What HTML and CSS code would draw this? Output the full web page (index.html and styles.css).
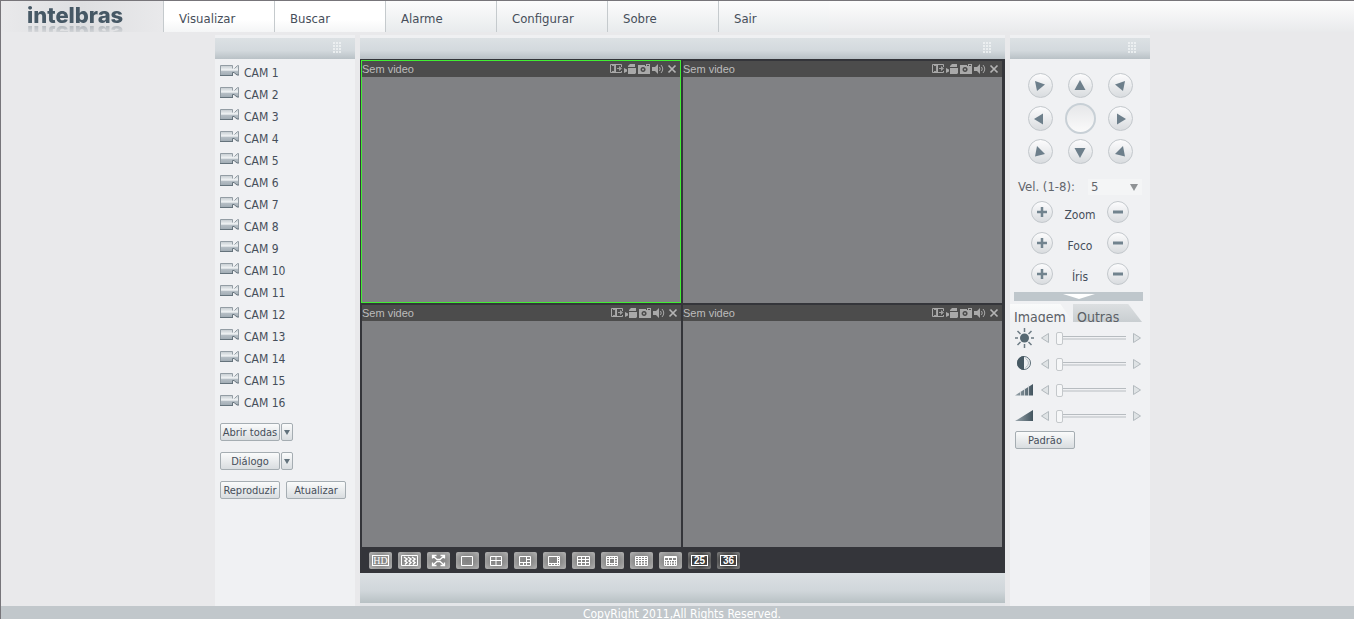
FILE: index.html
```html
<!DOCTYPE html>
<html lang="pt-BR">
<head>
<meta charset="utf-8">
<title>Intelbras</title>
<link rel="stylesheet" href="styles.css">
</head>
<body>
<svg class="defs" aria-hidden="true">
  <defs>
    <linearGradient id="camfill" x1="0" y1="0" x2="0" y2="1">
      <stop offset="0" stop-color="#c3cacf"/><stop offset=".45" stop-color="#f1f4f5"/><stop offset=".6" stop-color="#b4bdc4"/><stop offset="1" stop-color="#a0abb3"/>
    </linearGradient>
    <linearGradient id="dark" x1="0" y1="0" x2="1" y2="0">
      <stop offset="0" stop-color="#9aa6ad"/><stop offset="1" stop-color="#43555f"/>
    </linearGradient>
    <symbol id="cam" viewBox="0 0 19 13">
      <path d="M.5 1.500h12v3h2l2-2.500h2v9h-1.500l-2.500-2.500h-2v3H.5z" fill="url(#camfill)"/>
      <path d="M.5 11V1.500h12v3M14.500 4.500l3-3h1V11" fill="none" stroke="#939da4"/>
      <path d="M0 11.500h13M12.500 11V8.500h1.500l3 2.500h2" fill="none" stroke="#65737c"/>
    </symbol>
    <symbol id="grip" viewBox="0 0 9 11">
      <path d="M0 1h2M3 1h2M6 1h2M0 4h2M3 4h2M6 4h2M0 7h2M3 7h2M6 7h2M0 10h2M3 10h2M6 10h2" stroke="#f1f4f5" stroke-width="2" opacity=".8"/>
    </symbol>
    <symbol id="t-out" viewBox="0 0 12 10">
      <path d="M11.500 3V.5H.5v8h11V7M5.500 1v7" fill="none" stroke="#a9a9a9"/>
      <path d="M2 1h3v7H2zM7 4h2V2l3 2.500L9 7V5H7z" fill="#a9a9a9" opacity=".9"/>
      <path d="M2 2h2v5H2z" fill="#4c4c4c"/>
    </symbol>
    <symbol id="t-rec" viewBox="0 0 12 10">
      <path d="M4 2l2-2h5v3H4zM4 4h8v5l-1 1H4zM0 4l3 1.500v2L0 9z" fill="#a9a9a9"/>
    </symbol>
    <symbol id="t-photo" viewBox="0 0 12 10">
      <path d="M0 1h7v1h1V0h4v10H0zM5 3a2.500 2.500 0 1 0 .1 0zM9 1v1h2V1z" fill="#a9a9a9" fill-rule="evenodd"/>
      <circle cx="5" cy="5.500" r="1" fill="#a9a9a9"/>
    </symbol>
    <symbol id="t-sound" viewBox="0 0 12 10">
      <path d="M0 3h3l3-3v10L3 7H0z" fill="#a9a9a9"/>
      <path d="M7.500 3q1.500 2 0 4M9 1q3.500 4 0 8" fill="none" stroke="#a9a9a9"/>
    </symbol>
    <symbol id="t-close" viewBox="0 0 12 10">
      <path d="M2.500 1.500l7 7M9.500 1.500l-7 7" stroke="#b4b4b4" stroke-width="1.700"/>
    </symbol>
    <symbol id="plus" viewBox="0 0 12 12"><path d="M6 1v10M1 6h10" stroke="#71838e" stroke-width="2.500"/></symbol>
    <symbol id="minus" viewBox="0 0 12 12"><path d="M1 6h10" stroke="#71838e" stroke-width="3"/></symbol>
    <symbol id="step-l" viewBox="0 0 8 10"><path d="M7.500.5v9L.5 5z" fill="#dfe3e5" stroke="#b3babe"/></symbol>
    <symbol id="step-r" viewBox="0 0 8 10"><path d="M.5.5v9l7-4.500z" fill="#dfe3e5" stroke="#b3babe"/></symbol>
  </defs>
</svg>

<header class="top">
  <div class="brand"><span class="logo">intelbras</span></div>
  <nav class="menu">
    <a class="active" href="#visualizar">Visualizar</a>
    <a class="active" href="#buscar">Buscar</a>
    <a href="#alarme">Alarme</a>
    <a href="#configurar">Configurar</a>
    <a href="#sobre">Sobre</a>
    <a href="#sair">Sair</a>
  </nav>
</header>

<main class="layout">
  <aside class="panel">
    <div class="panel-head"><svg class="grip"><use href="#grip"/></svg></div>
    <ul class="cams">
      <li><a href="#1"><svg><use href="#cam"/></svg>CAM 1</a></li>
      <li><a href="#2"><svg><use href="#cam"/></svg>CAM 2</a></li>
      <li><a href="#3"><svg><use href="#cam"/></svg>CAM 3</a></li>
      <li><a href="#4"><svg><use href="#cam"/></svg>CAM 4</a></li>
      <li><a href="#5"><svg><use href="#cam"/></svg>CAM 5</a></li>
      <li><a href="#6"><svg><use href="#cam"/></svg>CAM 6</a></li>
      <li><a href="#7"><svg><use href="#cam"/></svg>CAM 7</a></li>
      <li><a href="#8"><svg><use href="#cam"/></svg>CAM 8</a></li>
      <li><a href="#9"><svg><use href="#cam"/></svg>CAM 9</a></li>
      <li><a href="#10"><svg><use href="#cam"/></svg>CAM 10</a></li>
      <li><a href="#11"><svg><use href="#cam"/></svg>CAM 11</a></li>
      <li><a href="#12"><svg><use href="#cam"/></svg>CAM 12</a></li>
      <li><a href="#13"><svg><use href="#cam"/></svg>CAM 13</a></li>
      <li><a href="#14"><svg><use href="#cam"/></svg>CAM 14</a></li>
      <li><a href="#15"><svg><use href="#cam"/></svg>CAM 15</a></li>
      <li><a href="#16"><svg><use href="#cam"/></svg>CAM 16</a></li>
    </ul>
    <div class="actions">
      <div class="split"><button class="btn">Abrir todas</button><button class="btn drop" aria-label="Opções de abrir"><svg viewBox="0 0 8 7"><path d="M1 1h6L4 6z" fill="#62727c"/></svg></button></div>
      <div class="split"><button class="btn">Diálogo</button><button class="btn drop" aria-label="Opções de diálogo"><svg viewBox="0 0 8 7"><path d="M1 1h6L4 6z" fill="#62727c"/></svg></button></div>
      <div class="pair"><button class="btn">Reproduzir</button><button class="btn">Atualizar</button></div>
    </div>
  </aside>

  <section class="center">
    <div class="panel-head"><svg class="grip"><use href="#grip"/></svg></div>
    <div class="stage">
      <div class="videos">
        <article class="video selected">
          <header>Sem video<span class="tools"><button aria-label="Expandir"><svg><use href="#t-out"/></svg></button><button aria-label="Gravar"><svg><use href="#t-rec"/></svg></button><button aria-label="Foto"><svg><use href="#t-photo"/></svg></button><button aria-label="Som"><svg><use href="#t-sound"/></svg></button><button aria-label="Fechar"><svg><use href="#t-close"/></svg></button></span></header>
        </article>
        <article class="video">
          <header>Sem video<span class="tools"><button aria-label="Expandir"><svg><use href="#t-out"/></svg></button><button aria-label="Gravar"><svg><use href="#t-rec"/></svg></button><button aria-label="Foto"><svg><use href="#t-photo"/></svg></button><button aria-label="Som"><svg><use href="#t-sound"/></svg></button><button aria-label="Fechar"><svg><use href="#t-close"/></svg></button></span></header>
        </article>
        <article class="video">
          <header>Sem video<span class="tools"><button aria-label="Expandir"><svg><use href="#t-out"/></svg></button><button aria-label="Gravar"><svg><use href="#t-rec"/></svg></button><button aria-label="Foto"><svg><use href="#t-photo"/></svg></button><button aria-label="Som"><svg><use href="#t-sound"/></svg></button><button aria-label="Fechar"><svg><use href="#t-close"/></svg></button></span></header>
        </article>
        <article class="video">
          <header>Sem video<span class="tools"><button aria-label="Expandir"><svg><use href="#t-out"/></svg></button><button aria-label="Gravar"><svg><use href="#t-rec"/></svg></button><button aria-label="Foto"><svg><use href="#t-photo"/></svg></button><button aria-label="Som"><svg><use href="#t-sound"/></svg></button><button aria-label="Fechar"><svg><use href="#t-close"/></svg></button></span></header>
        </article>
      </div>
      <div class="splits">
        <button class="boxed hd"><span>HD</span></button>
        <button aria-label="Fluidez"><svg viewBox="0 0 23 17"><path d="M3.500 3.500h16v10h-16z"/><path d="M6 5l3 2-2 2 2 1.500-2 2M10 5l3 2-2 2 2 1.500-2 2M14 5l3 2-2 2 2 1.500-2 2" stroke-width="1.500"/></svg></button>
        <button aria-label="Tela cheia"><svg viewBox="0 0 23 17"><path d="M5.500 6.500v-3h4M13.500 3.500h4v3M17.500 10.500v3h-4M9.500 13.500h-4v-3M6 4l4 3.500h3L17 4M6 13l4-3.500h3l4 3.500" stroke-width="1.300"/></svg></button>
        <button aria-label="1 janela"><svg viewBox="0 0 23 17"><path d="M5.500 4.500h11v9h-11z"/></svg></button>
        <button aria-label="4 janelas"><svg viewBox="0 0 23 17"><path d="M5.500 4.500h11v9h-11zM11 4v9M5 8.500h12"/></svg></button>
        <button aria-label="6 janelas"><svg viewBox="0 0 23 17"><path d="M5.500 4.500h11v9h-11zM12.500 4v9M9.500 10v3M12.500 7.500H17M5 10.500h12"/></svg></button>
        <button aria-label="8 janelas"><svg viewBox="0 0 23 17"><path d="M5.500 4.500h11v9h-11zM14.500 4v9M8.500 11v2M11.500 11v2M14 6.500h3M14 8.500h3M5 11.500h12"/></svg></button>
        <button aria-label="9 janelas"><svg viewBox="0 0 23 17"><path d="M5.500 4.500h12v9h-12zM9.500 4v9M13.500 4v9M5 7.500h12M5 10.500h12"/></svg></button>
        <button aria-label="13 janelas"><svg viewBox="0 0 23 17"><path d="M5.500 4.500h11v9h-11zM8.500 4v9M13.500 4v9M11 4v2.500M11 11v2M5 6.500h12M5 11.500h12M5 9h3M14 9h3"/></svg></button>
        <button aria-label="16 janelas"><svg viewBox="0 0 23 17"><path d="M5.500 4.500h12v9h-12zM8.500 4v9M11.500 4v9M14.500 4v9M5 6.500h12M5 8.500h12M5 11h12"/></svg></button>
        <button aria-label="20 janelas"><svg viewBox="0 0 23 17"><path d="M5.500 4.500h12v9h-12zM5 5.500h12M9.500 4v4M13.500 4v4M7.500 8v5M10.500 8v5M12.500 8v5M15.500 8v5M5 8.500h12M5 11h12"/></svg></button>
        <button class="boxed dim"><span>25</span></button>
        <button class="boxed dim"><span>36</span></button>
      </div>
    </div>
    <div class="center-foot"></div>
  </section>

  <aside class="panel">
    <div class="panel-head"><svg class="grip"><use href="#grip"/></svg></div>
    <div class="dpad">
      <button class="round" aria-label="Cima esquerda"><svg viewBox="0 0 12 12"><path d="M1 1l10 3.500L3 11z"/></svg></button>
      <button class="round" aria-label="Cima"><svg viewBox="0 0 12 12"><path d="M6 0l5.500 10H.5z"/></svg></button>
      <button class="round" aria-label="Cima direita"><svg viewBox="0 0 12 12"><path d="M11 1L1 4.500 9 11z"/></svg></button>
      <button class="round" aria-label="Esquerda"><svg viewBox="0 0 12 12"><path d="M0 6l9-5.500v11z"/></svg></button>
      <button class="round big" aria-label="Posição inicial"></button>
      <button class="round" aria-label="Direita"><svg viewBox="0 0 12 12"><path d="M12 6L3 .5v11z"/></svg></button>
      <button class="round" aria-label="Baixo esquerda"><svg viewBox="0 0 12 12"><path d="M3 0l8 8-10 2.500z"/></svg></button>
      <button class="round" aria-label="Baixo"><svg viewBox="0 0 12 12"><path d="M.5 2h11L6 12z"/></svg></button>
      <button class="round" aria-label="Baixo direita"><svg viewBox="0 0 12 12"><path d="M9 0L1 8l10 2.500z"/></svg></button>
    </div>
    <div class="speed">
      <label for="vel">Vel. (1-8):</label>
      <div class="select">
        <select id="vel"><option>1</option><option>2</option><option>3</option><option>4</option><option selected>5</option><option>6</option><option>7</option><option>8</option></select>
        <svg viewBox="0 0 8 8"><path d="M0 1h8L4 8z" fill="#8f9295"/></svg>
      </div>
    </div>
    <div class="lens">
      <button class="round small" aria-label="Mais zoom"><svg><use href="#plus"/></svg></button><span>Zoom</span><button class="round small" aria-label="Menos zoom"><svg><use href="#minus"/></svg></button>
      <button class="round small" aria-label="Mais foco"><svg><use href="#plus"/></svg></button><span>Foco</span><button class="round small" aria-label="Menos foco"><svg><use href="#minus"/></svg></button>
      <button class="round small" aria-label="Mais íris"><svg><use href="#plus"/></svg></button><span>Íris</span><button class="round small" aria-label="Menos íris"><svg><use href="#minus"/></svg></button>
    </div>
    <button class="expander" aria-label="Expandir controles"><svg viewBox="0 0 32 5"><path d="M0 0h32L16 5z" fill="#fff"/></svg></button>
    <div class="tabs">
      <button class="tab on">Imagem</button><button class="tab">Outras</button>
    </div>
    <div class="adjust">
      <div class="row">
        <svg class="kind" viewBox="0 0 20 20"><circle cx="9.500" cy="10" r="4.500" fill="#566872"/><path d="M9.500 0v4M9.500 16v4M0 10h3M16 10h3M2.500 3l3 3M13.500 14l3 3M16.500 3l-3 3M5.500 14l-3 3" stroke="#6c7b84" stroke-width="1.500"/></svg>
        <button class="step" aria-label="Menos brilho"><svg><use href="#step-l"/></svg></button>
        <input type="range" value="0" aria-label="Brilho">
        <button class="step" aria-label="Mais brilho"><svg><use href="#step-r"/></svg></button>
      </div>
      <div class="row">
        <svg class="kind" viewBox="0 0 20 20"><circle cx="9" cy="9" r="6.500" fill="#eef0f2" stroke="#5c6d77"/><path d="M9 2a7 7 0 0 0 0 14z" fill="#475963"/><path d="M10.500 4.500q3 1.500 3 4.500t-3 4.500" fill="none" stroke="#b5bec4"/></svg>
        <button class="step" aria-label="Menos contraste"><svg><use href="#step-l"/></svg></button>
        <input type="range" value="0" aria-label="Contraste">
        <button class="step" aria-label="Mais contraste"><svg><use href="#step-r"/></svg></button>
      </div>
      <div class="row">
        <svg class="kind" viewBox="0 0 20 20"><path d="M0 15.500L18 4v11.500z" fill="url(#dark)"/><path d="M5.500 11v5M9.500 8v8M13.500 5v11" stroke="#dde1e4" stroke-width=".8"/></svg>
        <button class="step" aria-label="Menos saturação"><svg><use href="#step-l"/></svg></button>
        <input type="range" value="0" aria-label="Saturação">
        <button class="step" aria-label="Mais saturação"><svg><use href="#step-r"/></svg></button>
      </div>
      <div class="row">
        <svg class="kind" viewBox="0 0 20 20"><path d="M0 15L18 4v11z" fill="url(#dark)"/></svg>
        <button class="step" aria-label="Menos matiz"><svg><use href="#step-l"/></svg></button>
        <input type="range" value="0" aria-label="Matiz">
        <button class="step" aria-label="Mais matiz"><svg><use href="#step-r"/></svg></button>
      </div>
      <button class="btn">Padrão</button>
    </div>
  </aside>
</main>

<footer class="copyright">CopyRight 2011,All Rights Reserved.</footer>
</body>
</html>
```

FILE: styles.css
```css
* { box-sizing: border-box; }
body {
  margin: 0;
  min-height: 100vh;
  display: flex;
  flex-direction: column;
  background: #e9e9eb;
  border-top: 1px solid #77757a;
  border-left: 1px solid #77757a;
  color: #464e5a;
  font: 12px/16px "DejaVu Sans Condensed", "Noto Sans", sans-serif;
}
button, select { font: inherit; color: inherit; padding: 0; }
button { border: 0; background: none; }
a { color: inherit; text-decoration: none; }
svg { display: block; }
.defs { position: absolute; width: 0; height: 0; }

/* Top bar */
.top {
  display: flex;
  height: 31px;
  background: linear-gradient(#fdfdfd, #e9eaec);
}
.brand {
  width: 162px;
  padding: 2px 0 0 26px;
  overflow: hidden;
  background: linear-gradient(90deg, #e9e9eb, #dedfe1 50%, #e9e9eb);
}
.logo {
  display: block;
  width: 110px;
  height: 22px;
  font: 800 22px/25px Inter, sans-serif;
  color: #465865;
  -webkit-box-reflect: below -1px linear-gradient(transparent 50%, rgba(0, 0, 0, .35));
}
.menu { display: flex; }
.menu a {
  width: 111px;
  padding: 2px 0 0 15px;
  border-left: 1px solid #c5cacd;
  font-size: 13px;
  line-height: 32px;
  background: linear-gradient(#fcfcfc, #e8ebed);
}
.menu .active { background: linear-gradient(#fff 60%, #f4f5f6); }

/* Columns */
.layout {
  flex: 1;
  display: grid;
  grid-template-columns: 140px 645px 140px;
  gap: 5px;
  justify-content: center;
  padding: 3px 0 0 10px;
}
.panel { background: #f0f1f3; }
.panel-head {
  display: flex;
  justify-content: flex-end;
  align-items: center;
  height: 24px;
  padding: 0 13px 2px 0;
  border-top: 3px solid #eff0f2;
  background: linear-gradient(#dce1e4, #d3d9dd 60%, #b9c1c6);
}
.grip { width: 9px; height: 11px; }

/* Camera list */
.cams { margin: 0; padding: 3px 5px 0; list-style: none; }
.cams a { display: flex; align-items: center; gap: 5px; height: 22px; }
.cams svg { width: 19px; height: 13px; margin-bottom: 5px; }
.actions { display: grid; gap: 11px; padding: 9px 5px 0; }
.split { display: flex; gap: 1px; }
.pair { display: flex; gap: 6px; }
.btn {
  width: 60px;
  height: 18px;
  padding-top: 1px;
  border: 1px solid #a5adb2;
  border-radius: 2px;
  background: linear-gradient(#fafbfb, #d9dde0);
  font-size: 11px;
  line-height: 16px;
  white-space: nowrap;
  display: flex;
  justify-content: center;
  align-items: center;
}
.drop { width: 12px; }
.drop svg { width: 8px; height: 7px; }

/* Video wall */
.center { display: flex; flex-direction: column; background: #e4e6e9; }
.stage { flex: 1; display: flex; flex-direction: column; background: #34353a; }
.videos {
  flex: 1;
  display: grid;
  grid-template: 1fr 1fr / 1fr 1fr;
  gap: 1px;
  padding: 1px 3px 0 1px;
}
.video {
  border: solid transparent;
  border-width: 1px 0 0 1px;
  background: #808184;
  background-clip: padding-box;
}
.video.selected { border: 1px solid #41ee33; }
.video header {
  display: flex;
  justify-content: space-between;
  align-items: center;
  height: 16px;
  padding: 0 2px 1px 0;
  background: #4c4c4c;
  color: #bcbcbc;
  font: 11px/14px "Liberation Sans", Arial, sans-serif;
}
.tools { display: flex; gap: 2px; padding-top: 1px; }
.tools svg { width: 12px; height: 10px; }
.splits { display: flex; gap: 6px; height: 26px; padding: 5px 9px; }
.splits button {
  width: 23px;
  height: 17px;
  border-radius: 2px;
  background: radial-gradient(#818181, #8d8d8d 45%, #b4b4b4);
}
.splits svg { width: 23px; height: 17px; fill: none; stroke: #fff; }
.splits .dim { background: radial-gradient(#3a3a3a 40%, #858585); }
.boxed { display: grid; place-items: center; }
.boxed span {
  width: 17px;
  height: 11px;
  border: 1px solid #fff;
  color: #fff;
  font: bold 10px/9px "Liberation Sans", Arial, sans-serif;
}
.hd span { font: 10px/9px "Liberation Serif", serif; }
.center-foot {
  height: 33px;
  border-bottom: 3px solid #e4e6e9;
  background: linear-gradient(#dbe0e3, #d0d6da 60%, #b8c1c4);
}

/* Camera movement */
.dpad {
  display: grid;
  grid-template: repeat(3, 33px) / repeat(3, 40px);
  justify-content: center;
  place-items: center;
  padding-top: 10px;
}
.round {
  display: grid;
  place-items: center;
  width: 25px;
  height: 25px;
  border: 1px solid #c3c8cc;
  border-radius: 50%;
  background: linear-gradient(#fcfcfd, #d9dcdf);
}
.round svg { width: 12px; height: 12px; fill: #6d7f8b; }
.big { width: 31px; height: 31px; border: 2px solid #c8d0d6; background: linear-gradient(#e6e7e9, #fafafa); }
.small { width: 22px; height: 22px; }
.speed {
  display: flex;
  justify-content: space-between;
  align-items: center;
  height: 20px;
  margin-top: 9px;
  padding: 0 8px;
  color: #62666c;
  font-size: 13px;
}
.select { display: grid; width: 54px; align-items: center; background: #f4f5f6; }
.select select, .select svg { grid-area: 1 / 1; }
.select select { appearance: none; width: 100%; padding-left: 3px; border: 0; background: none; }
.select svg { justify-self: end; width: 8px; height: 8px; margin-right: 4px; pointer-events: none; }
.lens {
  display: grid;
  grid-template: repeat(3, 31px) / 22px 54px 22px;
  justify-content: center;
  place-items: center;
}
.lens .small { margin-bottom: 2px; }
.lens span { padding-top: 4px; }
.expander {
  display: grid;
  place-items: center;
  width: 129px;
  height: 9px;
  margin: 2px 4px 3px;
  background: #bfc7cc;
}
.expander svg { width: 32px; height: 5px; }

/* Image settings */
.tabs { display: flex; height: 18px; padding-right: 8px; overflow: hidden; }
.tab {
  flex: 1;
  height: 18px;
  padding: 4px 0 0 4px;
  overflow: hidden;
  text-align: left;
  font-size: 14px;
  line-height: 18px;
  color: #5b6066;
  background: linear-gradient(#dcdfe1, #c9ced1);
  clip-path: polygon(0 0, 80% 0, 100% 100%, 0 100%);
}
.tab.on {
  flex: 0 0 63px;
  background: linear-gradient(#fafbfb, #f0f1f3);
}
.adjust { padding: 3px 5px 0; }
.row { display: flex; align-items: center; height: 26px; }
.row + .btn { margin-top: 2px; }
.kind { width: 20px; height: 20px; margin-right: 6px; }
.step svg { width: 8px; height: 10px; }
.row input {
  appearance: none;
  width: 70px;
  height: 14px;
  margin: 0 7px;
  background: linear-gradient(#b7bcc0, #b7bcc0) 0 5px / 100% 1px no-repeat,
    linear-gradient(#d4d7da, #d4d7da) 0 7px / 100% 2px no-repeat;
}
.row input::-webkit-slider-thumb {
  appearance: none;
  width: 7px;
  height: 13px;
  border: 1px solid #c4c8cb;
  border-radius: 2px;
  background: #f6f7f8;
}

/* Footer */
.copyright {
  height: 13px;
  padding-left: 9px;
  overflow: hidden;
  background: #c1c7cb;
  color: #fff;
  text-align: center;
}
```
